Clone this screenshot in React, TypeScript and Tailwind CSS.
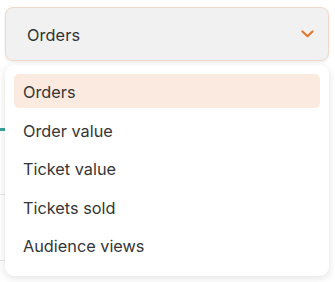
import React from 'react';

const options = ['Orders', 'Order value', 'Ticket value', 'Tickets sold', 'Audience views'];

const MetricSelect = () => {
  const selected = 'Orders';

  return (
    <div className="relative w-[335px] h-[282px] overflow-hidden bg-white" style={{ fontFamily: 'Inter, "Noto Sans", sans-serif' }}>
      {/* page behind the open menu */}
      <div className="absolute left-0 top-[128px] w-[6px] h-[3px] bg-[#3aa39a]" />
      <div className="absolute left-0 top-[194px] w-[6px] h-px bg-[#e6e6e6]" />
      <div className="absolute left-0 top-[260px] w-[6px] h-px bg-[#e6e6e6]" />

      <div className="relative flex flex-col px-[5px] pt-[7px] gap-[4px]">
        <button className="flex items-center justify-between h-[54px] w-[324px] pl-[21px] pr-[14px] pt-[3px] rounded-[8px] border border-[#f0d8ca] bg-[#f1f1f1] shadow-[0_1px_3px_rgba(0,0,0,0.08)]">
          <span className="text-[16.3px] text-[#333] tracking-[0.1px]">{selected}</span>
          <svg width="13" height="8" viewBox="0 0 13 8" fill="none" className="-mt-[3px]">
            <path d="M1.5 1.5L6.5 6.2L11.5 1.5" stroke="#e07a2f" strokeWidth="2.2" strokeLinecap="round" strokeLinejoin="round" />
          </svg>
        </button>

        <ul className="flex flex-col w-[324px] gap-[4.5px] pt-[9px] pb-[14px] px-[9px] rounded-[9px] bg-white shadow-[0_2px_8px_rgba(0,0,0,0.12)]">
          {options.map((o) => (
            <li
              key={o}
              className={
                o === selected
                  ? 'flex items-center h-[34px] pl-[9px] pt-[3px] rounded-[5px] bg-[#fbeae0] text-[16.3px] text-[#363636]'
                  : 'flex items-center h-[34px] pl-[9px] pt-[3px] text-[16.3px] text-[#363636]'
              }
            >
              {o}
            </li>
          ))}
        </ul>
      </div>
    </div>
  );
};

export default function App() {
  return <MetricSelect />;
}
